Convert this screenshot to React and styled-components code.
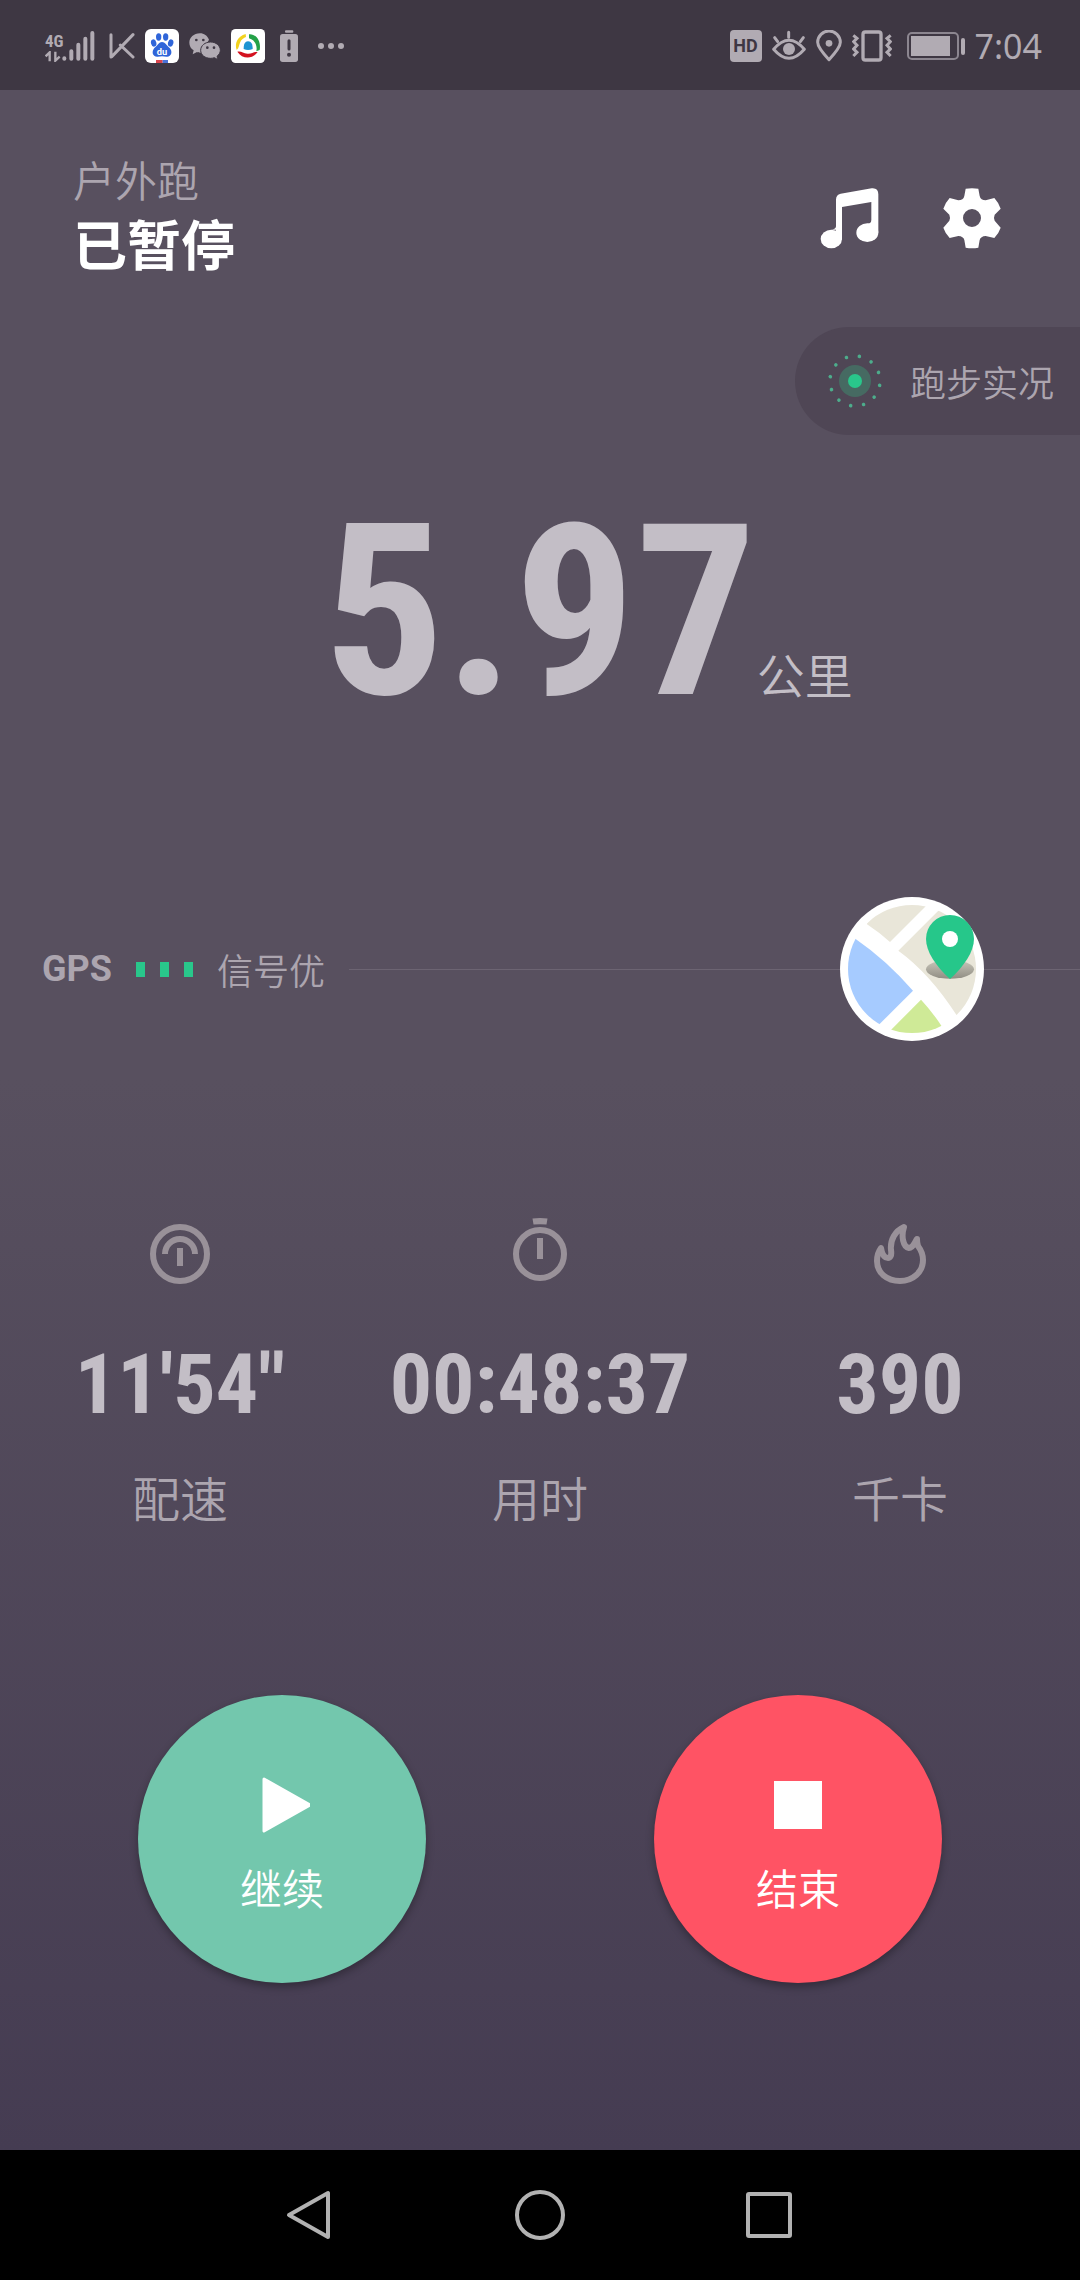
import styled, { createGlobalStyle } from "styled-components"

const GlobalStyle = createGlobalStyle`
  * {
    box-sizing: border-box;
  }
  body {
    margin: 0;
    background: #000;
    color: #aca5af;
    font-family: Roboto, "Noto Sans CJK SC", sans-serif;
  }
  button {
    border: 0;
    padding: 0;
    background: none;
    color: inherit;
    font-family: inherit;
    cursor: pointer;
  }
  svg {
    display: block;
    flex: none;
  }
`

const stats = [
  { label: "配速", value: "11'54\"", Icon: PaceIcon },
  { label: "用时", value: "00:48:37", Icon: TimerIcon },
  { label: "千卡", value: "390", Icon: FlameIcon },
];

const navStroke = { fill: "none", stroke: "#b2b2b2", strokeWidth: 4, strokeLinejoin: "round" };

export default function App() {
  return (
    <Page>
      <GlobalStyle />
      <StatusBar />
      <Main>
        <Header>
          <div>
            <Mode>户外跑</Mode>
            <State>已暂停</State>
          </div>
          <HeaderButtons>
            <button aria-label="音乐"><MusicIcon /></button>
            <button aria-label="设置"><GearIcon /></button>
          </HeaderButtons>
        </Header>

        <LiveButton>
          <LiveIcon />
          跑步实况
        </LiveButton>

        <Distance>
          <DistanceValue>5.97</DistanceValue>
          <DistanceUnit>公里</DistanceUnit>
        </Distance>

        <GpsRow>
          <GpsName>GPS</GpsName>
          <GpsBars>
            <i />
            <i />
            <i />
          </GpsBars>
          <GpsText>信号优</GpsText>
          <Line />
          <button aria-label="地图"><MapIcon /></button>
          <LineEnd />
        </GpsRow>

        <Stats>
          {stats.map(({ label, value, Icon }) => (
            <Stat key={label}>
              <Icon />
              <StatValue>{value}</StatValue>
              <StatLabel>{label}</StatLabel>
            </Stat>
          ))}
        </Stats>

        <Actions>
          <RoundButton $color="#73c7ad">
            <svg width="56" height="56" viewBox="0 0 56 56">
              <path d="M10 2 L56 28 L10 54 Z" fill="#fff" stroke="#fff" strokeWidth="3" strokeLinejoin="round" />
            </svg>
            继续
          </RoundButton>
          <RoundButton $color="#ff5364">
            <svg width="56" height="56" viewBox="0 0 56 56">
              <rect x="4" y="4" width="48" height="48" fill="#fff" />
            </svg>
            结束
          </RoundButton>
        </Actions>
      </Main>

      <NavBar>
        <button aria-label="返回">
          <svg width="50" height="50" viewBox="0 0 50 50">
            <path d="M43 3 V47 L4 25 Z" {...navStroke} />
          </svg>
        </button>
        <button aria-label="主页">
          <svg width="50" height="50" viewBox="0 0 50 50">
            <circle cx="25" cy="25" r="23" {...navStroke} />
          </svg>
        </button>
        <button aria-label="最近任务">
          <svg width="50" height="50" viewBox="0 0 50 50">
            <rect x="3" y="4" width="42" height="42" rx="1" {...navStroke} />
          </svg>
        </button>
      </NavBar>
    </Page>
  )
}

function StatusBar() {
  return (
    <StatusBox>
      <Network>
        <NetworkType>
          4G
          <svg width="17" height="11" viewBox="0 0 51 33">
            <path d="M2 16 L14 4 V31 M31 2 V29 L44 17" fill="none" stroke="#b1abb3" strokeWidth="7" />
          </svg>
        </NetworkType>
        <svg width="33" height="32" viewBox="0 0 99 96">
          <g stroke="#b1abb3" strokeWidth="12" strokeLinecap="round">
            <path d="M7 85 V86 M28 64 V86 M49 44 V86 M70 26 V86 M91 9 V86" />
          </g>
        </svg>
      </Network>
      <svg width="26" height="26" viewBox="0 0 78 78">
        <path d="M6 5 V72 M9 70 L72 5 M34 36 L72 72" fill="none" stroke="#b1abb3" strokeWidth="9" strokeLinecap="round" />
      </svg>
      <BaiduIcon />
      <WechatIcon />
      <BrowserIcon />
      <LowBattery width="18" height="32" viewBox="0 0 54 96">
        <rect x="15" y="1" width="25" height="7" rx="3" fill="#b1abb3" />
        <rect x="0" y="12" width="54" height="84" rx="8" fill="#b1abb3" />
        <path d="M27 32 V57" stroke="#3e3743" strokeWidth="9" strokeLinecap="round" />
        <circle cx="27" cy="74" r="6" fill="#3e3743" />
      </LowBattery>
      <MoreDots width="26" height="6" viewBox="0 0 26 6">
        <g fill="#b1abb3">
          <circle cx="3" cy="3" r="3" />
          <circle cx="13" cy="3" r="3" />
          <circle cx="23" cy="3" r="3" />
        </g>
      </MoreDots>
      <Spacer />
      <HdBadge>HD</HdBadge>
      <svg width="34" height="32" viewBox="0 0 102 96">
        <g fill="none" stroke="#b1abb3" strokeWidth="9" strokeLinecap="round">
          <path d="M5 58 Q51 4 97 58 Q51 112 5 58 Z" strokeLinejoin="round" />
          <path d="M8 23 L17 35 M50 7 V22 M94 23 L85 35" />
        </g>
        <circle cx="51" cy="57" r="18" fill="#b1abb3" />
      </svg>
      <svg width="26" height="32" viewBox="0 0 78 96">
        <path d="M39 89 Q5 53 5 37 A34 34 0 0 1 73 37 Q73 53 39 89 Z" fill="none" stroke="#b1abb3" strokeWidth="9" strokeLinejoin="round" />
        <circle cx="39" cy="40" r="10" fill="#b1abb3" />
      </svg>
      <svg width="40" height="32" viewBox="0 0 120 96">
        <g fill="none" stroke="#b1abb3">
          <rect x="33" y="6" width="54" height="84" rx="7" strokeWidth="10" />
          <path d="M4 16 L15 25 L5 35 L15 46 L5 57 L15 67 L4 78 M116 16 L105 25 L115 35 L105 46 L115 57 L105 67 L116 78" strokeWidth="9" />
        </g>
      </svg>
      <BatteryIcon width="58" height="28" viewBox="0 0 58 28">
        <rect x="1" y="1" width="50" height="26" rx="4" fill="none" stroke="#8c8690" strokeWidth="2" />
        <rect x="4" y="4" width="39" height="20" fill="#b1abb3" />
        <rect x="54" y="6" width="4" height="17" rx="2" fill="#b1abb3" />
      </BatteryIcon>
      <Clock>7:04</Clock>
    </StatusBox>
  )
}

function BaiduIcon() {
  return (
    <svg width="34" height="34" viewBox="0 0 102 102">
      <rect width="102" height="102" rx="18" fill="#fff" />
      <g fill="#2f65d9">
        <ellipse cx="26" cy="42" rx="8" ry="11" transform="rotate(-15 26 42)" />
        <ellipse cx="41" cy="24" rx="8" ry="11" />
        <ellipse cx="62" cy="24" rx="8" ry="11" />
        <ellipse cx="77" cy="42" rx="8" ry="11" transform="rotate(15 77 42)" />
        <path d="M51 39 C60 39 65 49 74 57 C84 68 79 84 65 83 C55 81 47 81 38 83 C22 84 19 68 28 57 C38 49 42 39 51 39 Z" />
      </g>
      <text x="51" y="77" textAnchor="middle" fontSize="28" fontWeight="700" fill="#fff">du</text>
      <rect x="33" y="93" width="20" height="9" fill="#d9444d" />
      <rect x="53" y="93" width="16" height="9" fill="#4a73d9" />
    </svg>
  )
}

function WechatIcon() {
  return (
    <svg width="32" height="27" viewBox="0 0 96 81">
      <path d="M33 1 C14 1 1 14 1 29 C1 39 6 47 14 52 L11 64 L24 57 C28 59 33 59 38 59 L60 20 C55 8 45 1 33 1 Z" fill="#b1abb3" />
      <path d="M65 27 C48 27 35 38 35 52 C35 66 48 76 65 76 C69 76 73 75 76 74 L87 80 L84 70 C90 65 94 59 94 52 C94 38 81 27 65 27 Z" fill="#b1abb3" stroke="#3e3743" strokeWidth="3" />
      <g fill="#3e3743">
        <circle cx="22" cy="21" r="4" />
        <circle cx="43" cy="21" r="4" />
        <circle cx="55" cy="44" r="4" />
        <circle cx="75" cy="44" r="4" />
      </g>
    </svg>
  )
}

function BrowserIcon() {
  return (
    <svg width="34" height="34" viewBox="0 0 102 102">
      <rect width="102" height="102" rx="14" fill="#fff" />
      <path d="M44 15 C20 22 10 42 17 63 C24 57 24 48 27 41 C30 31 39 27 45 24 Z" fill="#f3d21e" />
      <path d="M54 16 C76 14 91 37 86 63 L76 67 C80 48 70 32 54 28 Z" fill="#24a148" />
      <path d="M19 68 C34 91 64 92 80 69 C68 67 61 76 49 74 C36 74 31 65 19 68 Z" fill="#d3121f" />
      <path d="M38 60 C38 44 42 38 51 37 C61 38 65 44 65 60 Q51 66 38 60 Z" fill="#1d94d2" />
    </svg>
  )
}

function MusicIcon() {
  return (
    <svg width="60" height="62" viewBox="0 0 180 186">
      <g fill="#fff">
        <path d="M69 158 H51 V38 Q51 23 65 20 L158 4 Q178 2 178 22 V137 H145 V110 Q157 110 157 98 V45 L69 60 Z M51 118 V128 H37 Q51 127 51 118 Z" />
        <ellipse cx="145" cy="137" rx="33" ry="28" />
        <ellipse cx="37" cy="156" rx="32" ry="28" />
      </g>
    </svg>
  )
}

function GearIcon() {
  return (
    <svg width="60" height="62" viewBox="0 -3 180 186">
      <path
        fill="#fff"
        fillRule="evenodd"
        d="M71 2 Q90 -1 109 2 L113 24 Q116 37 131 37 L157 30 Q170 44 176 62 L158 80 Q154 90 158 98 L176 119 Q170 137 157 150 L131 144 Q116 145 113 156 L109 179 Q90 182 71 179 L67 156 Q64 145 49 144 L23 150 Q10 137 4 119 L22 98 Q26 90 22 80 L4 62 Q10 44 23 30 L49 37 Q64 37 67 24 Z M90 63 A27 27 0 1 0 90 117 A27 27 0 1 0 90 63 Z"
      />
    </svg>
  )
}

function LiveIcon() {
  return (
    <svg width="54" height="54" viewBox="-27 -27 54 54">
      <circle r="16" fill="#466a62" />
      <circle r="7" fill="#29c78b" />
      {[...Array(12)].map((_, i) => (
        <circle key={i} cy="-25" r="1.8" fill="#4dad8c" transform={`rotate(${10 + i * 30})`} />
      ))}
    </svg>
  )
}

function MapIcon() {
  return (
    <svg width="144" height="144" viewBox="0 0 432 432">
      <defs>
        <clipPath id="mapInner"><circle cx="216" cy="216" r="192" /></clipPath>
        <linearGradient id="pinShadow" x1="0" y1="0" x2="0" y2="1">
          <stop offset="0" stopColor="#c9c6ba" />
          <stop offset="1" stopColor="#918e84" />
        </linearGradient>
      </defs>
      <circle cx="216" cy="216" r="216" fill="#fff" />
      <g clipPath="url(#mapInner)">
        <path d="M80 81 L110 0 H285 L150 135 Q118 106 80 81 Z" fill="#e9e6d9" />
        <path d="M175 161 L295 41 H432 V432 L350 355 Q270 230 175 161 Z" fill="#e9e6d9" />
        <path d="M46 125 Q140 190 219 281 L100 400 L0 340 V125 Z" fill="#a6cbff" />
        <path d="M243 308 Q275 342 304 386 V432 H120 Z" fill="#cfea97" />
      </g>
      <ellipse cx="330" cy="217" rx="72" ry="28" fill="url(#pinShadow)" />
      <path d="M330 246 C288 208 258 164 258 126 A72 72 0 0 1 402 126 C402 164 372 208 330 246 Z" fill="#26c78a" />
      <circle cx="330" cy="126" r="24" fill="#fff" />
    </svg>
  )
}

function PaceIcon() {
  return (
    <svg width="72" height="72" viewBox="-6 -6 72 72" fill="none" stroke="#999199" strokeWidth="6">
      <circle cx="30" cy="30" r="27" />
      <path d="M15 30 A15 15 0 0 1 45 30 M30 24 V42" />
    </svg>
  )
}

function TimerIcon() {
  return (
    <svg width="72" height="72" viewBox="-6 -6 72 72" fill="none" stroke="#999199" strokeWidth="6">
      <circle cx="30" cy="30" r="24" />
      <path d="M30 14 V35" />
      <path d="M22.5 -5.5 Q30 -6.5 37.5 -5.5 L36.5 0.5 Q30 0 23.5 0.5 Z" fill="#999199" stroke="none" />
    </svg>
  )
}

function FlameIcon() {
  return (
    <svg width="72" height="72" viewBox="-6 -6 72 72" fill="none" stroke="#999199" strokeWidth="6" strokeLinejoin="round">
      <path d="M34 3 C25 7 20 16 21 26 C22 32 20 34 18 34 C14 34 12 30 11 24 C8 28 7 32 7 37 C7 49 17 57 30 57 C43 57 53 48 53 36 C53 30 51 26 48 22 C47 19 47 17 47 15 C45 18 43 24 39 24 C33 23 31 12 34 3 Z" />
    </svg>
  )
}

const Page = styled.div`
  min-height: 100vh;
  display: flex;
  flex-direction: column;
`

const StatusBox = styled.div`
  height: 90px;
  padding: 2px 38px 0 45px;
  background: #3e3743;
  color: #b1abb3;
  display: flex;
  align-items: center;
  gap: 10px;
`

const Network = styled.div`
  display: flex;
  align-items: center;
  margin-right: 4px;
`

const NetworkType = styled.div`
  width: 17px;
  font-family: "Roboto Condensed", Roboto, sans-serif;
  font-size: 17px;
  line-height: 20px;
  font-weight: 700;
`

const LowBattery = styled.svg`
  margin-left: 5px;
`

const MoreDots = styled.svg`
  margin-left: 10px;
`

const Spacer = styled.div`
  flex: 1;
`

const HdBadge = styled.div`
  width: 32px;
  height: 32px;
  border-radius: 4px;
  background: #b1abb3;
  color: #3e3743;
  font-size: 18px;
  line-height: 32px;
  font-weight: 700;
  text-align: center;
`

const BatteryIcon = styled.svg`
  margin-left: 5px;
`

const Clock = styled.div`
  font-family: "Noto Sans", sans-serif;
  font-size: 34px;
  line-height: 40px;
  font-weight: 400;
`

const Main = styled.main`
  flex: 1;
  display: flex;
  flex-direction: column;
  padding-top: 63px;
  background: linear-gradient(#58505f, #58505f 48%, #453c52);
`

const Header = styled.header`
  display: flex;
  justify-content: space-between;
  align-items: center;
  padding: 0 78px 0 73px;
`

const Mode = styled.div`
  font-size: 42px;
  line-height: 60px;
  font-weight: 350;
`

const State = styled.h1`
  margin: 0;
  color: #fff;
  font-size: 54px;
  line-height: 70px;
  font-weight: 700;
`

const HeaderButtons = styled.div`
  display: flex;
  gap: 63px;
`

const LiveButton = styled.button`
  align-self: flex-end;
  height: 108px;
  margin-top: 44px;
  padding: 0 26px 0 33px;
  border-radius: 54px 0 0 54px;
  background: #4f4655;
  display: flex;
  align-items: center;
  gap: 28px;
  font-size: 36px;
  font-weight: 350;
`

const Distance = styled.div`
  height: 300px;
  margin-top: 27px;
  display: grid;
  grid-template-columns: 1fr auto 1fr;
  align-items: baseline;
  color: #c3bec6;
`

const DistanceValue = styled.div`
  grid-column: 2;
  font-family: "Roboto Condensed", Roboto, sans-serif;
  font-size: 240px;
  line-height: 300px;
  font-weight: 700;
`

const DistanceUnit = styled.div`
  font-size: 48px;
  font-weight: 350;
`

const GpsRow = styled.div`
  margin-top: 135px;
  padding-left: 42px;
  display: flex;
  align-items: center;
`

const GpsName = styled.div`
  font-size: 36px;
  font-weight: 700;
`

const GpsBars = styled.div`
  display: flex;
  gap: 15px;
  margin: 0 24px;

  & > i {
    width: 9px;
    height: 15px;
    background: #29c78b;
  }
`

const GpsText = styled.div`
  font-size: 36px;
  font-weight: 350;
`

const Line = styled.div`
  flex: 1;
  height: 1px;
  margin-left: 24px;
  background: #6c6472;
`

const LineEnd = styled.div`
  width: 96px;
  height: 1px;
  background: #6c6472;
`

const Stats = styled.section`
  margin-top: 177px;
  display: grid;
  grid-template-columns: repeat(3, 1fr);
`

const Stat = styled.div`
  display: flex;
  flex-direction: column;
  align-items: center;
`

const StatValue = styled.div`
  margin-top: 35px;
  color: #c3bec6;
  font-family: "Roboto Condensed", Roboto, sans-serif;
  font-size: 84px;
  line-height: 120px;
  font-weight: 700;
`

const StatLabel = styled.div`
  margin-top: 20px;
  font-size: 48px;
  line-height: 72px;
  font-weight: 350;
`

const Actions = styled.div`
  margin: 158px 138px 167px;
  display: flex;
  justify-content: space-between;
`

const RoundButton = styled.button`
  width: 288px;
  height: 288px;
  padding-top: 20px;
  border-radius: 50%;
  background: ${(props) => props.$color};
  box-shadow: 0 4px 8px rgba(0, 0, 0, 0.3);
  color: #fff;
  display: flex;
  flex-direction: column;
  align-items: center;
  justify-content: center;
  gap: 28px;
  font-size: 42px;
  line-height: 60px;
  font-weight: 350;
`

const NavBar = styled.nav`
  height: 130px;
  background: #000;
  display: flex;
  justify-content: center;
  align-items: center;
  gap: 180px;
`
